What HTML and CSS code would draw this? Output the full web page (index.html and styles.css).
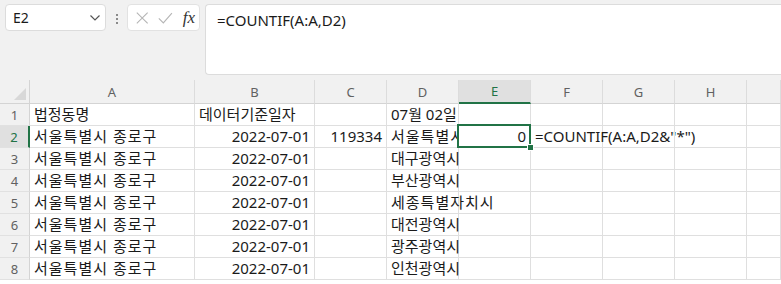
FILE: index.html
```html
<!DOCTYPE html>
<html lang="ko">
<head>
    <meta charset="UTF-8">
    <title>COUNTIF - Sheet1</title>
    <link rel="stylesheet" href="styles.css">
</head>
<body>
    <div class="toolbar">
        <div class="name-box">
            <span>E2</span>
            <svg class="chevron" width="12" height="8" viewBox="0 0 12 8"><path d="M1.5 1.5 L6 6 L10.5 1.5" fill="none" stroke="#555" stroke-width="1.2"/></svg>
        </div>
        <div class="grip">
            <span></span><span></span><span></span>
        </div>
        <div class="fx-box">
            <svg width="16" height="16" viewBox="0 0 16 16"><path d="M2 2 L14 14 M14 2 L2 14" stroke="#b5b5b5" stroke-width="1.2" fill="none"/></svg>
            <svg width="18" height="16" viewBox="0 0 18 16"><path d="M2 8.5 L7 13.5 L16.5 2.5" stroke="#b5b5b5" stroke-width="1.2" fill="none"/></svg>
            <span class="fx">fx</span>
        </div>
        <div class="formula-bar">=COUNTIF(A:A,D2)</div>
    </div>

    <div class="sheet">
        <div class="corner"><span class="corner-tri"></span></div>
        <div class="col-head">A</div>
        <div class="col-head">B</div>
        <div class="col-head">C</div>
        <div class="col-head">D</div>
        <div class="col-head active">E</div>
        <div class="col-head">F</div>
        <div class="col-head">G</div>
        <div class="col-head">H</div>
        <div class="col-head"></div>

        <div class="row-head">1</div>
        <div class="cell">법정동명</div>
        <div class="cell">데이터기준일자</div>
        <div class="cell"></div>
        <div class="cell">07월 02일</div>
        <div class="cell"></div>
        <div class="cell"></div>
        <div class="cell"></div>
        <div class="cell"></div>
        <div class="cell"></div>

        <div class="row-head active">2</div>
        <div class="cell ko">서울특별시 종로구</div>
        <div class="cell num">2022-07-01</div>
        <div class="cell num">119334</div>
        <div class="cell ko clip">서울특별시</div>
        <div class="cell num selected">0<span class="handle"></span></div>
        <div class="cell">=COUNTIF(A:A,D2&amp;"*")</div>
        <div class="cell"></div>
        <div class="cell"></div>
        <div class="cell"></div>

        <div class="row-head">3</div>
        <div class="cell ko">서울특별시 종로구</div>
        <div class="cell num">2022-07-01</div>
        <div class="cell"></div>
        <div class="cell">대구광역시</div>
        <div class="cell"></div>
        <div class="cell"></div>
        <div class="cell"></div>
        <div class="cell"></div>
        <div class="cell"></div>

        <div class="row-head">4</div>
        <div class="cell ko">서울특별시 종로구</div>
        <div class="cell num">2022-07-01</div>
        <div class="cell"></div>
        <div class="cell">부산광역시</div>
        <div class="cell"></div>
        <div class="cell"></div>
        <div class="cell"></div>
        <div class="cell"></div>
        <div class="cell"></div>

        <div class="row-head">5</div>
        <div class="cell ko">서울특별시 종로구</div>
        <div class="cell num">2022-07-01</div>
        <div class="cell"></div>
        <div class="cell ko">세종특별자치시</div>
        <div class="cell"></div>
        <div class="cell"></div>
        <div class="cell"></div>
        <div class="cell"></div>
        <div class="cell"></div>

        <div class="row-head">6</div>
        <div class="cell ko">서울특별시 종로구</div>
        <div class="cell num">2022-07-01</div>
        <div class="cell"></div>
        <div class="cell">대전광역시</div>
        <div class="cell"></div>
        <div class="cell"></div>
        <div class="cell"></div>
        <div class="cell"></div>
        <div class="cell"></div>

        <div class="row-head">7</div>
        <div class="cell ko">서울특별시 종로구</div>
        <div class="cell num">2022-07-01</div>
        <div class="cell"></div>
        <div class="cell">광주광역시</div>
        <div class="cell"></div>
        <div class="cell"></div>
        <div class="cell"></div>
        <div class="cell"></div>
        <div class="cell"></div>

        <div class="row-head">8</div>
        <div class="cell ko">서울특별시 종로구</div>
        <div class="cell num">2022-07-01</div>
        <div class="cell"></div>
        <div class="cell">인천광역시</div>
        <div class="cell"></div>
        <div class="cell"></div>
        <div class="cell"></div>
        <div class="cell"></div>
        <div class="cell"></div>
    </div>
</body>
</html>
```

FILE: styles.css
```css
body {
    margin: 0;
    width: 781px;
    height: 284px;
    overflow: hidden;
    background-color: #ffffff;
    font-family: "Noto Sans", "Noto Sans CJK KR", sans-serif;
    color: #1a1a1a;
}
.toolbar {
    display: flex;
    align-items: flex-start;
    height: 80px;
    padding: 4px 0 0 5px;
    box-sizing: border-box;
    background-color: #f1f1f1;
}
.name-box {
    display: flex;
    align-items: center;
    justify-content: space-between;
    width: 101px;
    height: 27px;
    box-sizing: border-box;
    padding: 0 4px 0 7px;
    background-color: white;
    border: 1px solid #dcdcdc;
    border-radius: 4px;
    font-size: 14px;
}
.grip {
    display: flex;
    flex-direction: column;
    gap: 2px;
    width: 21px;
    align-items: center;
    padding-top: 10px;
}
.grip span {
    width: 2px;
    height: 2px;
    background-color: #8a8a8a;
}
.fx-box {
    display: flex;
    align-items: center;
    gap: 8px;
    width: 73px;
    height: 27px;
    box-sizing: border-box;
    padding: 0 4px 0 7px;
    background-color: white;
    border: 1px solid #e2e2e2;
    border-radius: 4px;
}
.fx {
    font-family: "Liberation Serif", serif;
    font-style: italic;
    font-size: 17px;
    color: #333;
    margin-left: 1px;
}
.formula-bar {
    flex: 1;
    height: 71px;
    margin-left: 5px;
    box-sizing: border-box;
    padding: 5px 11px;
    background-color: white;
    border: 1px solid #dcdcdc;
    border-right: none;
    border-radius: 4px 0 0 4px;
    font-size: 15px;
}
.sheet {
    display: grid;
    grid-template-columns: 30px 165px 120px 72px 72px 72px 72px 72px 72px 1fr;
    grid-template-rows: 24px repeat(8, 22px);
}
.corner,
.col-head,
.row-head {
    background-color: #f1f1f1;
    color: #616161;
    font-size: 13px;
    box-sizing: border-box;
}
.corner {
    position: relative;
    border-bottom: 1px solid #d4d4d4;
    border-right: 1px solid #d4d4d4;
}
.corner-tri {
    position: absolute;
    right: 3px;
    bottom: 3px;
    width: 0;
    height: 0;
    border-left: 12px solid transparent;
    border-bottom: 12px solid #d8d8d8;
}
.col-head {
    display: flex;
    align-items: center;
    justify-content: center;
    border-bottom: 1px solid #d4d4d4;
    border-right: 1px solid #dcdcdc;
}
.col-head.active {
    background-color: #e0e0e0;
    color: #217346;
    border-bottom: 2px solid #217346;
}
.row-head {
    display: flex;
    align-items: center;
    justify-content: center;
    border-bottom: 1px solid #e1e1e1;
    border-right: 1px solid #d4d4d4;
}
.row-head.active {
    background-color: #e0e0e0;
    color: #217346;
    border-right: 2px solid #217346;
}
.cell {
    box-sizing: border-box;
    padding: 0 4px 0 4px;
    border-right: 1px solid #dfdfdf;
    border-bottom: 1px solid #dfdfdf;
    font-size: 15px;
    line-height: 21px;
    white-space: nowrap;
}
.ko {
    letter-spacing: 1px;
}
.num {
    text-align: right;
}
.clip {
    overflow: hidden;
}
.selected {
    position: relative;
    background-color: white;
}
.selected::after {
    content: "";
    position: absolute;
    left: -2px;
    top: -2px;
    right: -1px;
    bottom: -1px;
    border: 2px solid #217346;
}
.handle {
    position: absolute;
    right: -4px;
    bottom: -4px;
    width: 5px;
    height: 5px;
    background-color: #217346;
    border: 1px solid white;
    z-index: 1;
}
```
